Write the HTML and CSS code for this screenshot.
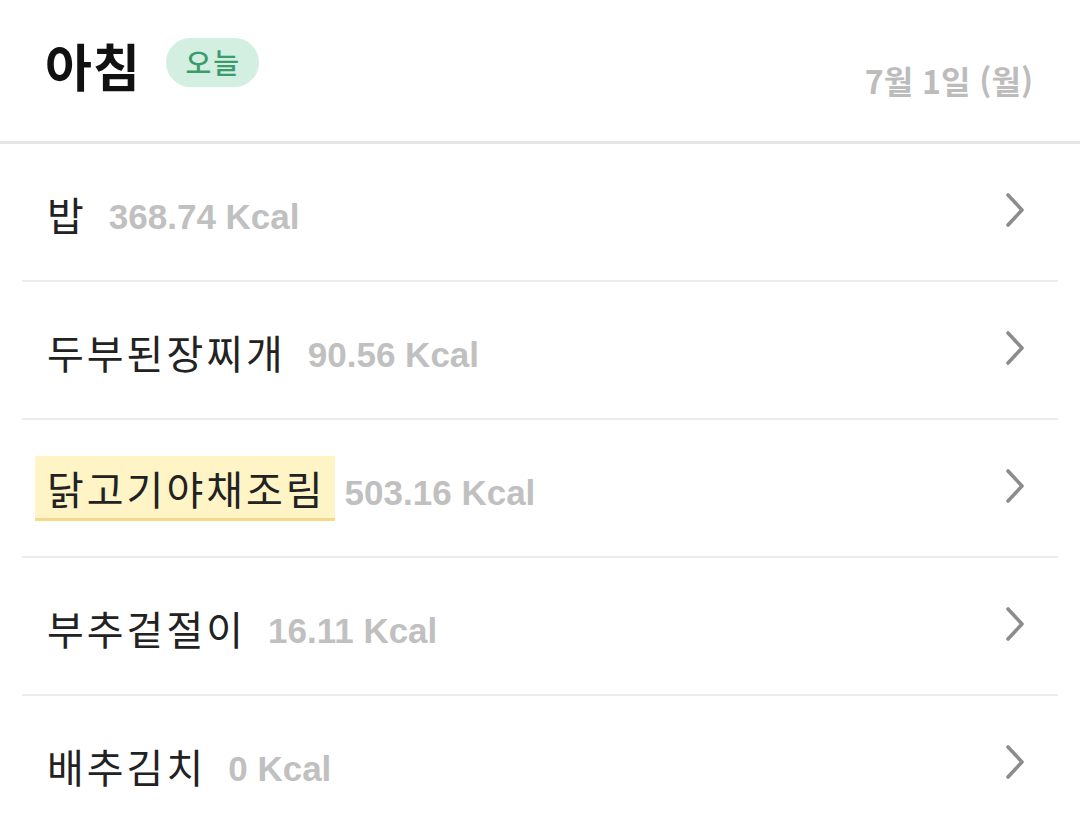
FILE: index.html
```html
<!DOCTYPE html>
<html lang="ko">
<head>
<meta charset="utf-8">
<link rel="stylesheet" href="styles.css">
</head>
<body>
<header class="header">
  <div class="title-group">
    <h1 class="title">아침</h1>
    <span class="badge">오늘</span>
  </div>
  <div class="date">7월 1일 (월)</div>
</header>
<ul class="list">
  <li class="row">
    <span class="name">밥</span><span class="kcal">368.74 Kcal</span>
    <svg class="chev" viewBox="0 0 22 36" width="22" height="36"><path d="M4 3 L18 18 L4 33"/></svg>
  </li>
  <li class="row">
    <span class="name">두부된장찌개</span><span class="kcal">90.56 Kcal</span>
    <svg class="chev" viewBox="0 0 22 36" width="22" height="36"><path d="M4 3 L18 18 L4 33"/></svg>
  </li>
  <li class="row">
    <span class="name highlight">닭고기야채조림</span><span class="kcal">503.16 Kcal</span>
    <svg class="chev" viewBox="0 0 22 36" width="22" height="36"><path d="M4 3 L18 18 L4 33"/></svg>
  </li>
  <li class="row">
    <span class="name">부추겉절이</span><span class="kcal">16.11 Kcal</span>
    <svg class="chev" viewBox="0 0 22 36" width="22" height="36"><path d="M4 3 L18 18 L4 33"/></svg>
  </li>
  <li class="row">
    <span class="name">배추김치</span><span class="kcal">0 Kcal</span>
    <svg class="chev" viewBox="0 0 22 36" width="22" height="36"><path d="M4 3 L18 18 L4 33"/></svg>
  </li>
</ul>
</body>
</html>
```

FILE: styles.css
```css
html, body {
  margin: 0;
  padding: 0;
  background: #ffffff;
  font-family: "Noto Sans CJK KR", "Noto Sans", sans-serif;
}

.header {
  height: 144px;
  box-sizing: border-box;
  border-bottom: 3px solid #e6e6e6;
  display: flex;
  justify-content: space-between;
  padding: 0 47px 0 45px;
}

.title-group {
  display: flex;
  align-items: center;
  height: 130px;
}

.title {
  margin: 0;
  font-size: 51px;
  font-weight: 700;
  color: #111111;
  line-height: 1;
  letter-spacing: 1px;
}

.badge {
  margin-left: 25px;
  height: 49px;
  width: 93px;
  border-radius: 25px;
  background: #d2efe1;
  color: #3d9a6c;
  font-size: 28px;
  font-weight: 500;
  letter-spacing: 2px;
  text-indent: 2px;
  display: flex;
  align-items: center;
  justify-content: center;
  margin-top: -6px;
}

.date {
  align-self: flex-start;
  margin-top: 58px;
  font-size: 32px;
  font-weight: 700;
  color: #bcbcbc;
  line-height: 44px;
}

.list {
  list-style: none;
  margin: 0 22px;
  padding: 0;
}

.row {
  height: 136px;
  border-bottom: 2px solid #ececec;
  display: flex;
  align-items: center;
  padding: 0 32px 0 25px;
}

.name {
  font-size: 40px;
  letter-spacing: 3px;
  color: #222222;
  line-height: 1;
  padding-top: 4px;
}

.highlight {
  background: #fff4c6;
  border-bottom: 3px solid #f4da88;
  padding: 12px 9px 10px 12px;
  margin: 0 -12px;
}

.kcal {
  margin-left: 22px;
  font-family: "Liberation Sans", Arial, sans-serif;
  font-weight: 700;
  font-size: 35px;
  color: #c0c0c0;
  padding-top: 10px;
}

.chev {
  margin-left: auto;
  fill: none;
  stroke: #8c8c8c;
  stroke-width: 3.6;
  stroke-linecap: round;
  stroke-linejoin: round;
  margin-top: -4px;
}
```
